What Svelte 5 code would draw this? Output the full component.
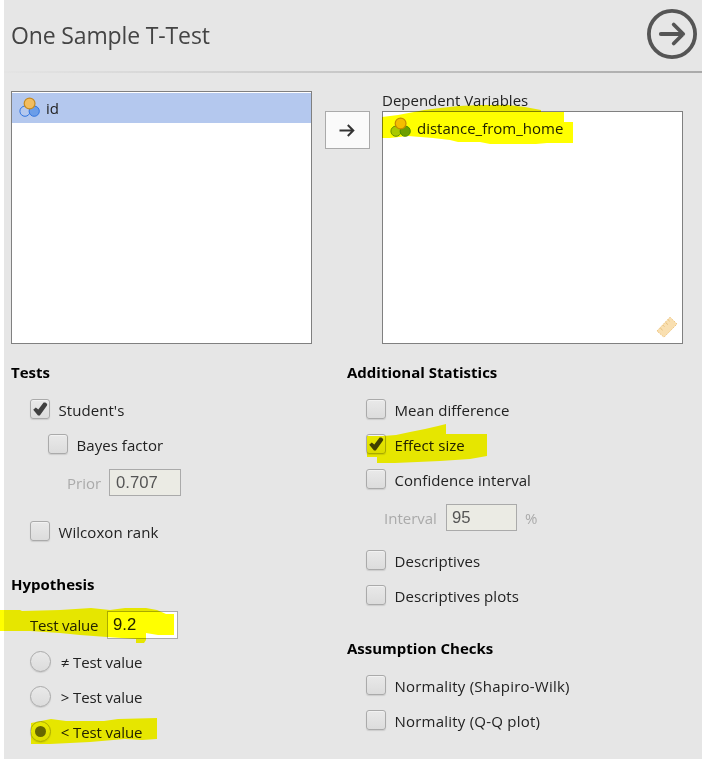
<script>
  let tests = $state({ students: true, bayes: false, wilcoxon: false });
  let stats = $state([
    { label: 'Mean difference', on: false },
    { label: 'Effect size', on: true },
    { label: 'Confidence interval', on: false }
  ]);
  let descriptives = $state([
    { label: 'Descriptives', on: false },
    { label: 'Descriptives plots', on: false }
  ]);
  let checks = $state([
    { label: 'Normality (Shapiro-Wilk)', on: false },
    { label: 'Normality (Q-Q plot)', on: false }
  ]);
  let hypothesis = $state('<');
</script>

{#snippet nominal(a, b, sa, sb, top, st)}
  <svg class="vicon" width="22" height="21" viewBox="0 0 22 21">
    <circle cx="6" cy="14.2" r="5.1" fill={a} stroke={sa} />
    <circle cx="15.2" cy="14.2" r="5.1" fill={b} stroke={sb} />
    <circle cx="10.6" cy="6.5" r="5.4" fill={top} stroke={st} stroke-width="1.2" />
  </svg>
{/snippet}

{#snippet check(label, on, toggle)}
  <button class="row" onclick={toggle}>
    <span class="box">
      {#if on}
        <svg width="18" height="18" viewBox="0 0 18 18"><path d="M2.2 9.8 L4.8 7.6 L7.3 9.4 L12.6 2.4 L14.4 2.4 L16.2 4 L16 5.4 L8.8 15.5 L7 15.5 Z" fill="#404040" /></svg>
      {/if}
    </span>
    <span class="label">{label}</span>
  </button>
{/snippet}

<main>
  <header>
    <h1>One Sample T-Test</h1>
    <svg width="50" height="50" viewBox="0 0 50 50" fill="none" stroke="#555" stroke-linecap="round" stroke-linejoin="round">
      <circle cx="25" cy="25" r="23.1" stroke-width="3.8" />
      <path d="M13.8 25H36M26.7 15.5L36.2 25L26.7 34.5" stroke-width="3.8" />
    </svg>
  </header>
  <div class="rule"></div>

  <section class="vars">
    <div class="list source">
      <div class="item selected">
        {@render nominal('#b4c8ee', '#6b9de8', '#3074e0', '#3074e0', '#f3bd5e', '#c58a20')}
        <span>id</span>
      </div>
    </div>
    <button class="move" aria-label="Move">
      <svg width="16" height="14" viewBox="0 0 16 14" fill="none" stroke="#333" stroke-width="2"><path d="M0.5 7.5H14.5M8.8 2L14.3 7.5L8.8 13" /></svg>
    </button>
    <div class="target">
      <div class="caption">Dependent Variables</div>
      <div class="list dest">
        <div class="item">
          {@render nominal('#a9c91b', '#6c9f14', '#668f12', '#4b8b10', '#f3bd1e', '#c58a10')}
          <span class="dist">distance_from_home</span>
        </div>
        <svg class="ruler" width="22" height="22" viewBox="0 0 22 22">
          <path d="M1 15L14 1.2L21 8L8 21.2Z" fill="#f9dfb0" stroke="#efc885" stroke-dasharray="2 1" />
          <path d="M4.3 12L6.6 14.2M7 9.2L8.4 10.6M9.6 6.4L11.9 8.6M12.2 3.8L13.6 5.2" stroke="#e6bd78" />
        </svg>
      </div>
    </div>
  </section>

  <section class="options">
    <div class="col left">
      <h2>Tests</h2>
      {@render check("Student's", tests.students, () => (tests.students = !tests.students))}
      <div class="nested">{@render check('Bayes factor', tests.bayes, () => (tests.bayes = !tests.bayes))}</div>
      <div class="field prior"><span>Prior</span><input value="0.707" disabled /></div>
      {@render check('Wilcoxon rank', tests.wilcoxon, () => (tests.wilcoxon = !tests.wilcoxon))}
      <h2 class="hyp">Hypothesis</h2>
      <div class="field value"><span>Test value</span><input value="9.2" /></div>
      {#each ['≠', '>', '<'] as op}
        <button class="row radio" onclick={() => (hypothesis = op)}>
          <span class="dot" class:on={hypothesis === op}></span>
          <span class="label"><i>{op}</i>Test value</span>
        </button>
      {/each}
    </div>
    <div class="col right">
      <h2>Additional Statistics</h2>
      {#each stats as s}{@render check(s.label, s.on, () => (s.on = !s.on))}{/each}
      <div class="field interval"><span>Interval</span><input value="95" disabled /><span class="pct">%</span></div>
      {#each descriptives as s}{@render check(s.label, s.on, () => (s.on = !s.on))}{/each}
      <h2 class="assume">Assumption Checks</h2>
      <div class="checks">
        {#each checks as s}{@render check(s.label, s.on, () => (s.on = !s.on))}{/each}
      </div>
    </div>
  </section>

  <svg class="marker" width="702" height="759" viewBox="0 0 702 759" fill="#ff0">
    <path d="M382 117L398 115L414 112L424 110L440 108L459 106L480 105H508L525 107L541 110V112H564V122H573V143H547L536 144H490L480 142H458L450 140L433 138L408 136L390 138H382Z" />
    <path d="M367 436H383L396 435L410 432L425 429L438 426L446 424V434H465V434H487V456L470 459L440 461L395 463H377V457H367Z" />
    <path d="M0 610H20L22 611L60 610L91 608L110 610L125 608H146L157 610L166 614H174V635H158L146 633V640L144 643H136V639L107 637L80 635L60 633L30 631H0Z" />
    <path d="M31 723L51 719L66 721H104L118 719L157 718V739L142 740L125 739L90 742L50 744H31Z" />
  </svg>
</main>

<style>
  :global(body) { background: #fff; }
  main {
    position: relative;
    width: 702px;
    height: 759px;
    box-sizing: border-box;
    padding-left: 4px;
    overflow: hidden;
    background: linear-gradient(to right, #fff 4px, #e6e6e6 4px);
    font-family: "Open Sans", "Noto Sans", sans-serif;
    font-size: 15px;
    color: #222;
  }
  header {
    display: flex;
    justify-content: space-between;
    height: 71px;
    padding: 0 5px 0 7px;
  }
  header svg { margin-top: 9px; }
  h1 { margin: 19px 0 0; font-size: 23px; line-height: 32px; font-weight: 400; color: #444; letter-spacing: -0.14px; }
  .rule { height: 2px; background: linear-gradient(to right, #e4e4e4, #aaa); }
  .vars { display: flex; padding: 18px 0 0 7px; height: 253px; }
  .list { box-sizing: border-box; width: 301px; border: 1px solid #808080; background: #fff; }
  .source { height: 253px; padding-top: 1px; }
  .item { display: flex; align-items: center; height: 30px; padding-left: 7px; gap: 5px; }
  .selected { background: #b4c8ee; }
  .vicon { margin-top: -1px; }
  .move {
    display: flex; align-items: center; justify-content: center;
    width: 45px; height: 38px; margin: 20px 12px 0 13px; padding: 0 1px 0 0;
    border: 1px solid #aaa; background: #fafafa;
  }
  .caption { height: 20px; line-height: 18px; white-space: nowrap; }
  .dest { position: relative; height: 233px; padding-top: 1px; }
  .ruler { position: absolute; right: 4px; bottom: 5px; }
  .options { display: flex; padding: 16px 0 0 7px; }
  .left { width: 336px; }
  h2 { margin: 0 0 7px; height: 24px; line-height: 24px; font-size: 15px; font-weight: 700; color: #000; white-space: nowrap; }
  .row {
    display: flex; align-items: center; height: 35px; padding: 0 0 0 19px; border: 0;
    background: none; font: inherit; color: inherit; gap: 8.5px; white-space: nowrap; letter-spacing: 0.06px;
  }
  .row .label { padding-top: 2px; }
  .row.radio { gap: 8px; letter-spacing: -0.1px; }
  .row.radio .label { padding-top: 0; }
  .checks .row { letter-spacing: 0.22px; }
  .nested { padding-left: 18px; }
  .box {
    box-sizing: border-box; display: block; width: 20px; height: 20px; border: 1px solid #aaa; border-radius: 3px;
    background: linear-gradient(#e9e9e9, #dcdcdc); box-shadow: 0 1px 1px #ccc, inset 0 1px 0 #f2f2f2;
  }
  .box svg { display: block; }
  .field { display: flex; align-items: center; height: 35px; white-space: nowrap; }
  .field span { color: #aaa; }
  input {
    box-sizing: border-box; width: 72px; height: 28px; padding: 0 0 1px 5px; border: 1px solid #aaa; border-radius: 0;
    background: #fff; color: #222; font-family: "Liberation Sans", Arial, sans-serif; font-size: 16.7px;
  }
  input:disabled { background: #ebebe4; color: #555; height: 27px; padding: 1px 0 0 6px; }
  .prior { height: 43px; padding-left: 56px; margin-bottom: 9px; }
  .prior span { width: 42px; }
  .value { padding-left: 19px; margin-bottom: 2px; }
  .value span { width: 77px; color: #222; letter-spacing: -0.2px; }
  .value input, .interval input { width: 71px; }
  .value input { padding-bottom: 0; }
  .interval input { padding-left: 5px; }
  .hyp { margin: 24px 0 11px; }
  .interval { height: 43px; padding-left: 37px; margin-bottom: 3px; }
  .interval span { width: 62px; }
  .interval .pct { width: auto; margin-left: 8px; }
  .assume { margin: 24px 0 7px; }
  .dot {
    box-sizing: border-box; display: grid; place-items: center; width: 21px; height: 21px; border: 1px solid #aaa;
    border-radius: 50%; background: linear-gradient(#e9e9e9, #dcdcdc); box-shadow: 0 1px 1px #ccc;
  }
  .dot.on::after { content: ""; width: 11px; height: 11px; border-radius: 50%; background: #666; }
  i { display: inline-block; width: 14px; font-style: normal; font-size: 15px; text-indent: -2px; }
  .marker { position: absolute; left: 0; top: 0; mix-blend-mode: multiply; pointer-events: none; }
</style>
